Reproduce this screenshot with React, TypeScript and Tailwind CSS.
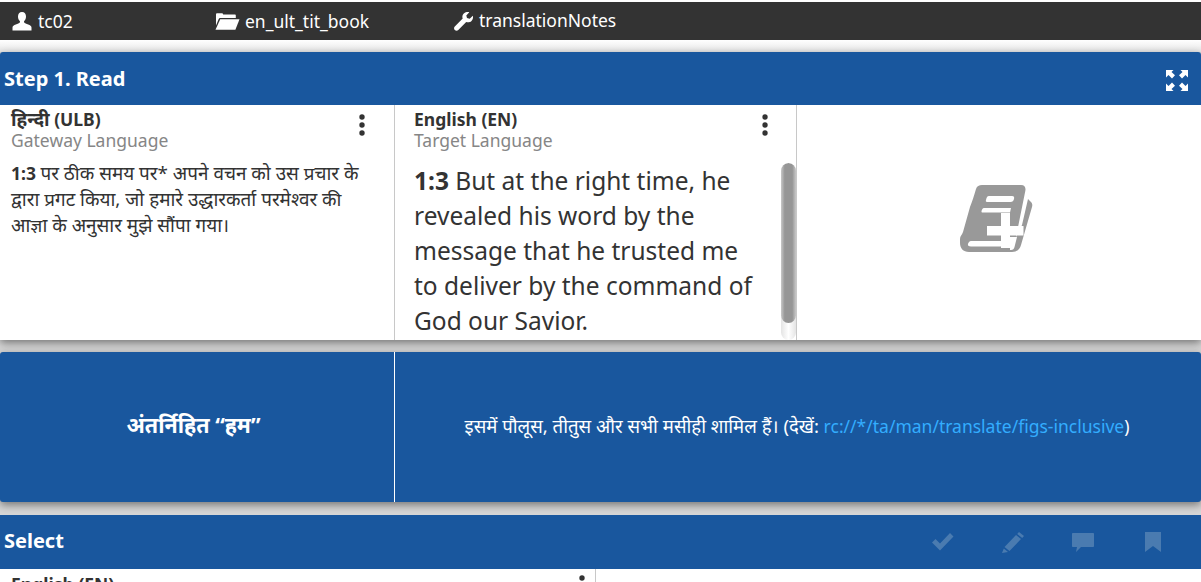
const sans = "font-['Noto_Sans','Noto_Sans_Devanagari','Open_Sans',sans-serif]";

function UserIcon() {
  return (
    <svg width="20" height="19" viewBox="0 0 20 19" fill="white" className="shrink-0">
      <path d="M10 0C7.400 0 6 1.900 6 4.400c0 1.900.8 3.600 1.800 4.700.3.400.3 1 0 1.400-.5.6-2.200 1.200-4 2-1.900.8-3.300 1.500-3.300 3V18.500h19V15.500c0-1.500-1.400-2.200-3.300-3-1.800-.8-3.500-1.400-4-2-.3-.4-.3-1 0-1.400C13.200 8 14 6.300 14 4.400 14 1.900 12.600 0 10 0z" />
    </svg>
  );
}

function FolderIcon() {
  return (
    <svg width="25" height="17" viewBox="0 0 25 17" fill="white" className="shrink-0">
      <path d="M1 1.500C1 .7 1.500.3 2.200.3h4.600c.7 0 1.200.5 1.400 1.200h11.600c.6 0 1 .4 1 1V5H5.500C4.500 5 4 5.500 3.600 6.300L1 12.500z" />
      <path d="M5.200 6.200h19.300L20.400 16.800H.5z" />
    </svg>
  );
}

function WrenchIcon() {
  return (
    <svg width="19" height="19" viewBox="0 0 19 19" fill="white" className="shrink-0">
      <path d="M18.800 3.800l-3.100 3-2.700-.7-.7-2.700 3-3.100C13.500-.4 11.200 0 9.800 1.400 8.400 2.800 8 4.800 8.700 6.600L.8 14.500c-1 1-1 2.500 0 3.500s2.500 1 3.500 0l7.900-7.900c1.800.6 3.900.2 5.300-1.200 1.400-1.400 1.900-3.200 1.300-5.100z" />
    </svg>
  );
}

function ExpandIcon() {
  return (
    <svg width="22" height="21" viewBox="0 0 22 21" fill="white" className="mt-[3px]">
      <path d="M0 0h7.500L5.500 2 9 5.300 6 8.500 2.500 5 0 7.500z" />
      <path d="M22 0h-7.500l2 2L13 5.300l3 3.200L19.500 5 22 7.500z" />
      <path d="M0 21h7.500l-2-2L9 15.700l-3-3.200L2.500 16 0 13.500z" />
      <path d="M22 21h-7.500l2-2L13 15.700l3-3.200L19.500 16 22 13.500z" />
    </svg>
  );
}

function Dots({ top }: { top: number }) {
  return (
    <svg width="8" height="22" viewBox="0 0 8 22" fill="#333333" style={{ marginTop: top }} className="shrink-0">
      <circle cx="4" cy="3" r="2.700" />
      <circle cx="4" cy="11" r="2.700" />
      <circle cx="4" cy="19" r="2.700" />
    </svg>
  );
}

function BookPlus() {
  return (
    <svg width="74" height="68" viewBox="0 0 74 68" className="block">
      <path
        fill="#999999"
        d="M16 4C17 1 19 0 22 0H61C65 0 66 3 65.300 6L54 62C53 65 51 67 47 67H9C3 67 0 63 0 58V54C0 51 2 50 3 47L10 22C12 17 14 11 16 4z"
      />
      <path fill="#999999" d="M68 14L71 17C72.500 18.500 72.500 20 72 22L61 60C60 64 57 67 52 67H46L56 52L62 40z" />
      <path fill="#ffffff" d="M29 11H52C54 11 54.500 12 54 14C53.500 16 52.500 17 50.500 17H27C26 17 25.500 16.300 26 15C26.500 13 27 11 29 11z" />
      <path fill="#ffffff" d="M24 23H51L50 27.500H22.500C21.800 27.500 21.300 27 21.500 26C22 24.500 22.500 23 24 23z" />
      <path fill="#ffffff" d="M11 56H41V61.500H11C8.500 61.500 7.500 60.500 8 59C8.300 57.500 9.500 56 11 56z" />
      <path fill="#ffffff" d="M50 52H57L54.500 62C54 64 53 65 51 65H50z" />
      <path fill="#ffffff" d="M41 28H50V41H63.500V50.500H50V63H41V50.500H27V41H41z" />
    </svg>
  );
}

function CheckIcon() {
  return (
    <svg width="22" height="18" viewBox="0 0 22 18" fill="#4a7bb0">
      <path d="M0 9.500L3.500 6l4.500 4.500L18 0l3.500 3.500L8 17.500z" />
    </svg>
  );
}
function PencilIcon() {
  return (
    <svg width="23" height="21" viewBox="0 0 23 21" fill="#4a7bb0">
      <path d="M17 0l5 4-1.800 2-5-4zM14 3l5 4L7.500 19 2.500 15z" />
      <path d="M1.800 16.500l4.200 3.500L0 21z" />
    </svg>
  );
}
function CommentIcon() {
  return (
    <svg width="22" height="19" viewBox="0 0 22 19" fill="#4a7bb0">
      <path d="M1 0h20c.6 0 1 .4 1 1v12c0 .6-.4 1-1 1H9l-5 5 1-5H1c-.6 0-1-.4-1-1V1c0-.6.4-1 1-1z" />
    </svg>
  );
}
function BookmarkIcon() {
  return (
    <svg width="16" height="20" viewBox="0 0 16 20" fill="#4a7bb0">
      <path d="M0 0h16v20l-8-6-8 6z" />
    </svg>
  );
}

function PaneHeader({ title, sub, dotTop }: { title: React.ReactNode; sub: string; dotTop: number }) {
  return (
    <div className="flex items-start justify-between">
      <div className="flex flex-col">
        <span className="text-[17.5px] leading-[21px] font-bold text-[#333333]">{title}</span>
        <span className="text-[17.5px] leading-[20px] text-[#868686]">{sub}</span>
      </div>
      <Dots top={dotTop} />
    </div>
  );
}

export default function App() {
  return (
    <div className={`h-[582px] w-[1201px] overflow-hidden bg-[#d6d6d6] ${sans}`}>
      <div className="h-[2px] bg-white" />
      <div className="relative z-10 flex h-[38px] items-center bg-[#333333] text-[17.5px] text-white">
        <div className="flex w-[215px] items-center gap-[6px] pl-[12px]">
          <UserIcon />
          <span>tc02</span>
        </div>
        <div className="flex w-[239px] items-center gap-[5px]">
          <FolderIcon />
          <span>en_ult_tit_book</span>
        </div>
        <div className="flex items-center gap-[6px]">
          <WrenchIcon />
          <span className="-mt-[2px]">translationNotes</span>
        </div>
      </div>

      <div className="h-[12px] bg-gradient-to-b from-[#ffffff] to-[#e6e6e6]" />

      <section className="rounded-t-[3px] shadow-[0_3px_8px_rgba(0,0,0,0.45)]">
        <div className="flex h-[53px] items-center justify-between rounded-t-[3px] bg-[#19579e] pl-[4px] pr-[13px]">
          <span className="text-[20px] font-bold text-white">Step 1. Read</span>
          <ExpandIcon />
        </div>
        <div className="flex h-[235px] bg-white">
          <div className="w-[395px] border-r border-[#c8c8c8] pl-[11px] pr-[24px] pt-[4px]">
            <div className="pr-[4px]">
              <PaneHeader title={<><span className="text-[18.9px]">हिन्दी</span> (ULB)</>} sub="Gateway Language" dotTop={5} />
            </div>
            <p className="mt-[10px] text-[17.5px] leading-[26px] text-[#333333]">
              <b>1:3</b>{" "}
              <span className="text-[18.9px]">
                पर ठीक समय पर* अपने वचन को उस प्रचार के द्वारा प्रगट किया, जो हमारे उद्धारकर्ता परमेश्वर की आज्ञा के अनुसार मुझे सौंपा गया।
              </span>
            </p>
          </div>
          <div className="relative w-[402px] border-r border-[#c8c8c8] pl-[19px] pr-[27px] pt-[4px]">
            <PaneHeader title="English (EN)" sub="Target Language" dotTop={5} />
            <p className="mt-[13px] w-[350px] text-[24.5px] leading-[35px] text-[#333333]">
              <b>1:3</b> But at the right time, he revealed his word by the message that he trusted me to deliver by the command of God our Savior.
            </p>
            <div className="absolute right-0 top-[58px] h-[177px] w-[15px] overflow-hidden rounded-[8px] bg-gradient-to-r from-[#e4e4e4] via-[#ffffff] to-[#e4e4e4]">
              <div className="h-[160px] rounded-[8px] bg-[linear-gradient(to_right,#c8c8c8,#969696_25%,#969696_75%,#c8c8c8)]" />
            </div>
          </div>
          <div className="flex flex-1 items-center justify-center pb-[8px] pr-[4px]">
            <BookPlus />
          </div>
        </div>
      </section>

      <section className="mt-[12px] flex h-[150px] rounded-[3px] bg-[#19579e] text-white shadow-[0_3px_8px_rgba(0,0,0,0.45)]">
        <div className="flex w-[395px] items-center justify-center border-r border-white pb-[4px] pr-[7px] text-[21.5px] font-bold">
          अंतर्निहित “हम”
        </div>
        <div className="flex flex-1 items-center justify-center pb-[3px] pr-[2px] text-[17.5px]">
          <span>
            <span className="text-[18.6px]">इसमें पौलूस, तीतुस और सभी मसीही शामिल हैं। (देखें:</span>{" "}
            <span className="text-[#33adff]">rc://*/ta/man/translate/figs-inclusive</span>)
          </span>
        </div>
      </section>

      <section className="mt-[13px]">
        <div className="flex h-[54px] items-center justify-between bg-[#19579e] pl-[4px]">
          <span className="-mt-[2px] text-[20px] font-bold text-white">Select</span>
          <div className="flex items-center">
            <div className="flex w-[70px] justify-center"><CheckIcon /></div>
            <div className="flex w-[70px] justify-center"><PencilIcon /></div>
            <div className="flex w-[70px] justify-center"><CommentIcon /></div>
            <div className="flex w-[70px] justify-center"><BookmarkIcon /></div>
            <div className="w-[13px]" />
          </div>
        </div>
        <div className="flex h-[13px] overflow-hidden bg-white">
          <div className="h-[50px] w-[596px] border-r border-[#c8c8c8] pl-[11px] pr-[9px] pt-[5px]">
            <PaneHeader title="English (EN)" sub="Target Language" dotTop={1} />
          </div>
        </div>
      </section>
    </div>
  );
}
